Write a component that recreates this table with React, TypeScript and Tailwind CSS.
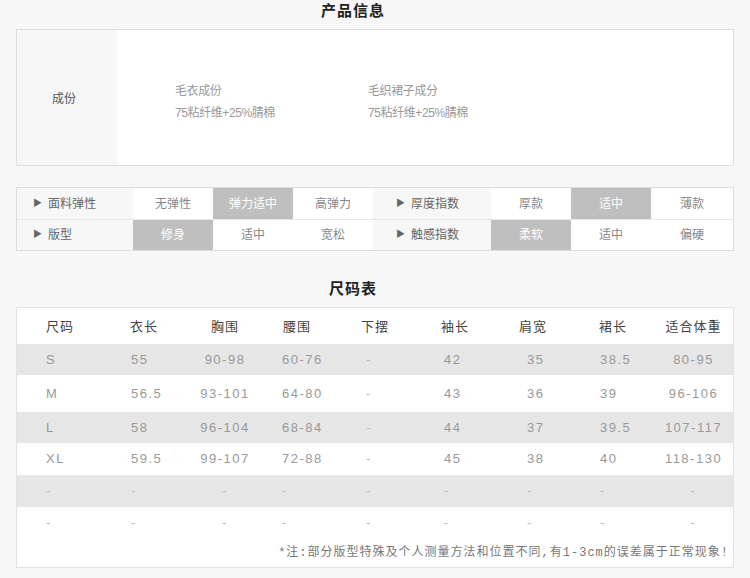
import * as React from 'react'

const font = 'font-["Liberation_Sans","Noto_Sans_CJK_SC",sans-serif]'

const attrRows = [
  {
    left: { label: '面料弹性', opts: ['无弹性', '弹力适中', '高弹力'], on: 1 },
    right: { label: '厚度指数', opts: ['厚款', '适中', '薄款'], on: 1 },
  },
  {
    left: { label: '版型', opts: ['修身', '适中', '宽松'], on: 0 },
    right: { label: '触感指数', opts: ['柔软', '适中', '偏硬'], on: 0 },
  },
]

const cols = [
  { w: 'w-[98px]', h: 'pl-[29px]', d: 'pl-[29px]' },
  { w: 'w-[75px]', h: 'pl-[15px]', d: 'pl-[16px]' },
  { w: 'w-[70px]', h: 'text-center', d: 'text-center' },
  { w: 'w-[90px]', h: 'pl-[23px]', d: 'pl-[22px]' },
  { w: 'w-[80px]', h: 'pl-[11px]', d: 'pl-[16px]' },
  { w: 'w-[75px]', h: 'pl-[11px]', d: 'pl-[14px]' },
  { w: 'w-[80px]', h: 'pl-[14px]', d: 'pl-[22px]' },
  { w: 'w-[55px]', h: 'pl-[14px]', d: 'pl-[15px]' },
  { w: 'flex-1', h: 'pl-[14px] text-center', d: 'pl-[14px] text-center' },
]

const headers = ['尺码', '衣长', '胸围', '腰围', '下摆', '袖长', '肩宽', '裙长', '适合体重']

const sizes = [
  { h: 'h-[31px]', bg: 'bg-[#e6e6e6]', v: ['S', '55', '90-98', '60-76', '-', '42', '35', '38.5', '80-95'] },
  { h: 'h-[37px]', bg: 'bg-white', v: ['M', '56.5', '93-101', '64-80', '-', '43', '36', '39', '96-106'] },
  { h: 'h-[31px]', bg: 'bg-[#e6e6e6]', v: ['L', '58', '96-104', '68-84', '-', '44', '37', '39.5', '107-117'] },
  { h: 'h-[32px]', bg: 'bg-white', v: ['XL', '59.5', '99-107', '72-88', '-', '45', '38', '40', '118-130'] },
  { h: 'h-[32px]', bg: 'bg-[#e6e6e6]', v: ['-', '-', '-', '-', '-', '-', '-', '-', '-'] },
  { h: 'h-[32px]', bg: 'bg-white', v: ['-', '-', '-', '-', '-', '-', '-', '-', '-'] },
]

function AttrGroup({ g, labelW, lastW }: { g: { label: string; opts: string[]; on: number }; labelW: string; lastW: string }) {
  return (
    <>
      <div className={`${labelW} flex items-center bg-[#f7f7f7] text-[#666]`}>
        <span className="text-[9px] text-[#666] mr-[6px]">▶</span>
        {g.label}
      </div>
      {g.opts.map((o, i) => (
        <div
          key={o + i}
          className={`${i === 2 ? lastW : 'w-[80px]'} flex items-center justify-center ${i === g.on ? 'bg-[#bfbfbf] text-white' : 'bg-white text-[#888]'}`}
        >
          {o}
        </div>
      ))}
    </>
  )
}

export default function App() {
  return (
    <div className={`w-[750px] h-[578px] bg-[#f7f7f7] ${font} overflow-hidden`}>
      <div className="h-[29px] pr-[44px] text-center text-[15px] font-bold tracking-[1px] text-[#222]">产品信息</div>

      <div className="mx-[16px] w-[718px] h-[137px] border border-[#dedede] flex bg-white">
        <div className="w-[100px] bg-[#f6f6f6] flex items-center justify-center pt-[3px] pr-[6px] text-[12px] text-[#555]">成份</div>
        <div className="flex-1 flex items-center pl-[58px] pt-[8px] text-[12px] text-[#999] leading-[22px] tracking-[-0.4px]">
          <div className="w-[193px]">
            <div>毛衣成份</div>
            <div>75粘纤维+25%腈棉</div>
          </div>
          <div>
            <div>毛织裙子成分</div>
            <div>75粘纤维+25%腈棉</div>
          </div>
        </div>
      </div>

      <div className="mt-[21px] mx-[16px] w-[718px] border border-[#dedede] text-[12px] bg-white">
        {attrRows.map((r, i) => (
          <div key={i} className={`flex h-[31px] ${i === 1 ? 'border-t border-[#e6e6e6]' : ''}`}>
            <div className="flex w-[356px] [&>div:first-child]:pl-[16px]">
              <AttrGroup g={r.left} labelW="w-[116px]" lastW="w-[80px]" />
            </div>
            <div className="flex flex-1 [&>div:first-child]:pl-[23px]">
              <AttrGroup g={r.right} labelW="w-[118px]" lastW="flex-1" />
            </div>
          </div>
        ))}
      </div>

      <div className="h-[56px] pr-[44px] pt-[27px] text-center text-[15px] font-bold tracking-[1px] text-[#222]">尺码表</div>

      <div className="mx-[16px] w-[718px] border border-[#e2e2e2] bg-white">
        <div className="flex h-[36px] items-center pt-[2px] text-[13px] tracking-[1px] text-[#444]">
          {headers.map((t, i) => (
            <div key={t} className={`${cols[i].w} ${cols[i].h} whitespace-nowrap`}>{t}</div>
          ))}
        </div>
        {sizes.map((r, ri) => (
          <div key={ri} className={`flex items-center ${r.h} ${r.bg} text-[13px] tracking-[1.5px]`}>
            {r.v.map((t, i) => (
              <div key={i} className={`${cols[i].w} ${cols[i].d} whitespace-nowrap ${t === '-' ? 'text-[#bbb]' : 'text-[#999]'}`}>{t}</div>
            ))}
          </div>
        ))}
        <div className='h-[28px] flex items-center justify-end pr-[4px] text-[12px] tracking-[1px] text-[#777] font-["Liberation_Mono","Noto_Sans_CJK_SC",monospace]'>
          *注:部分版型特殊及个人测量方法和位置不同,有1-3cm的误差属于正常现象!
        </div>
      </div>
    </div>
  )
}
